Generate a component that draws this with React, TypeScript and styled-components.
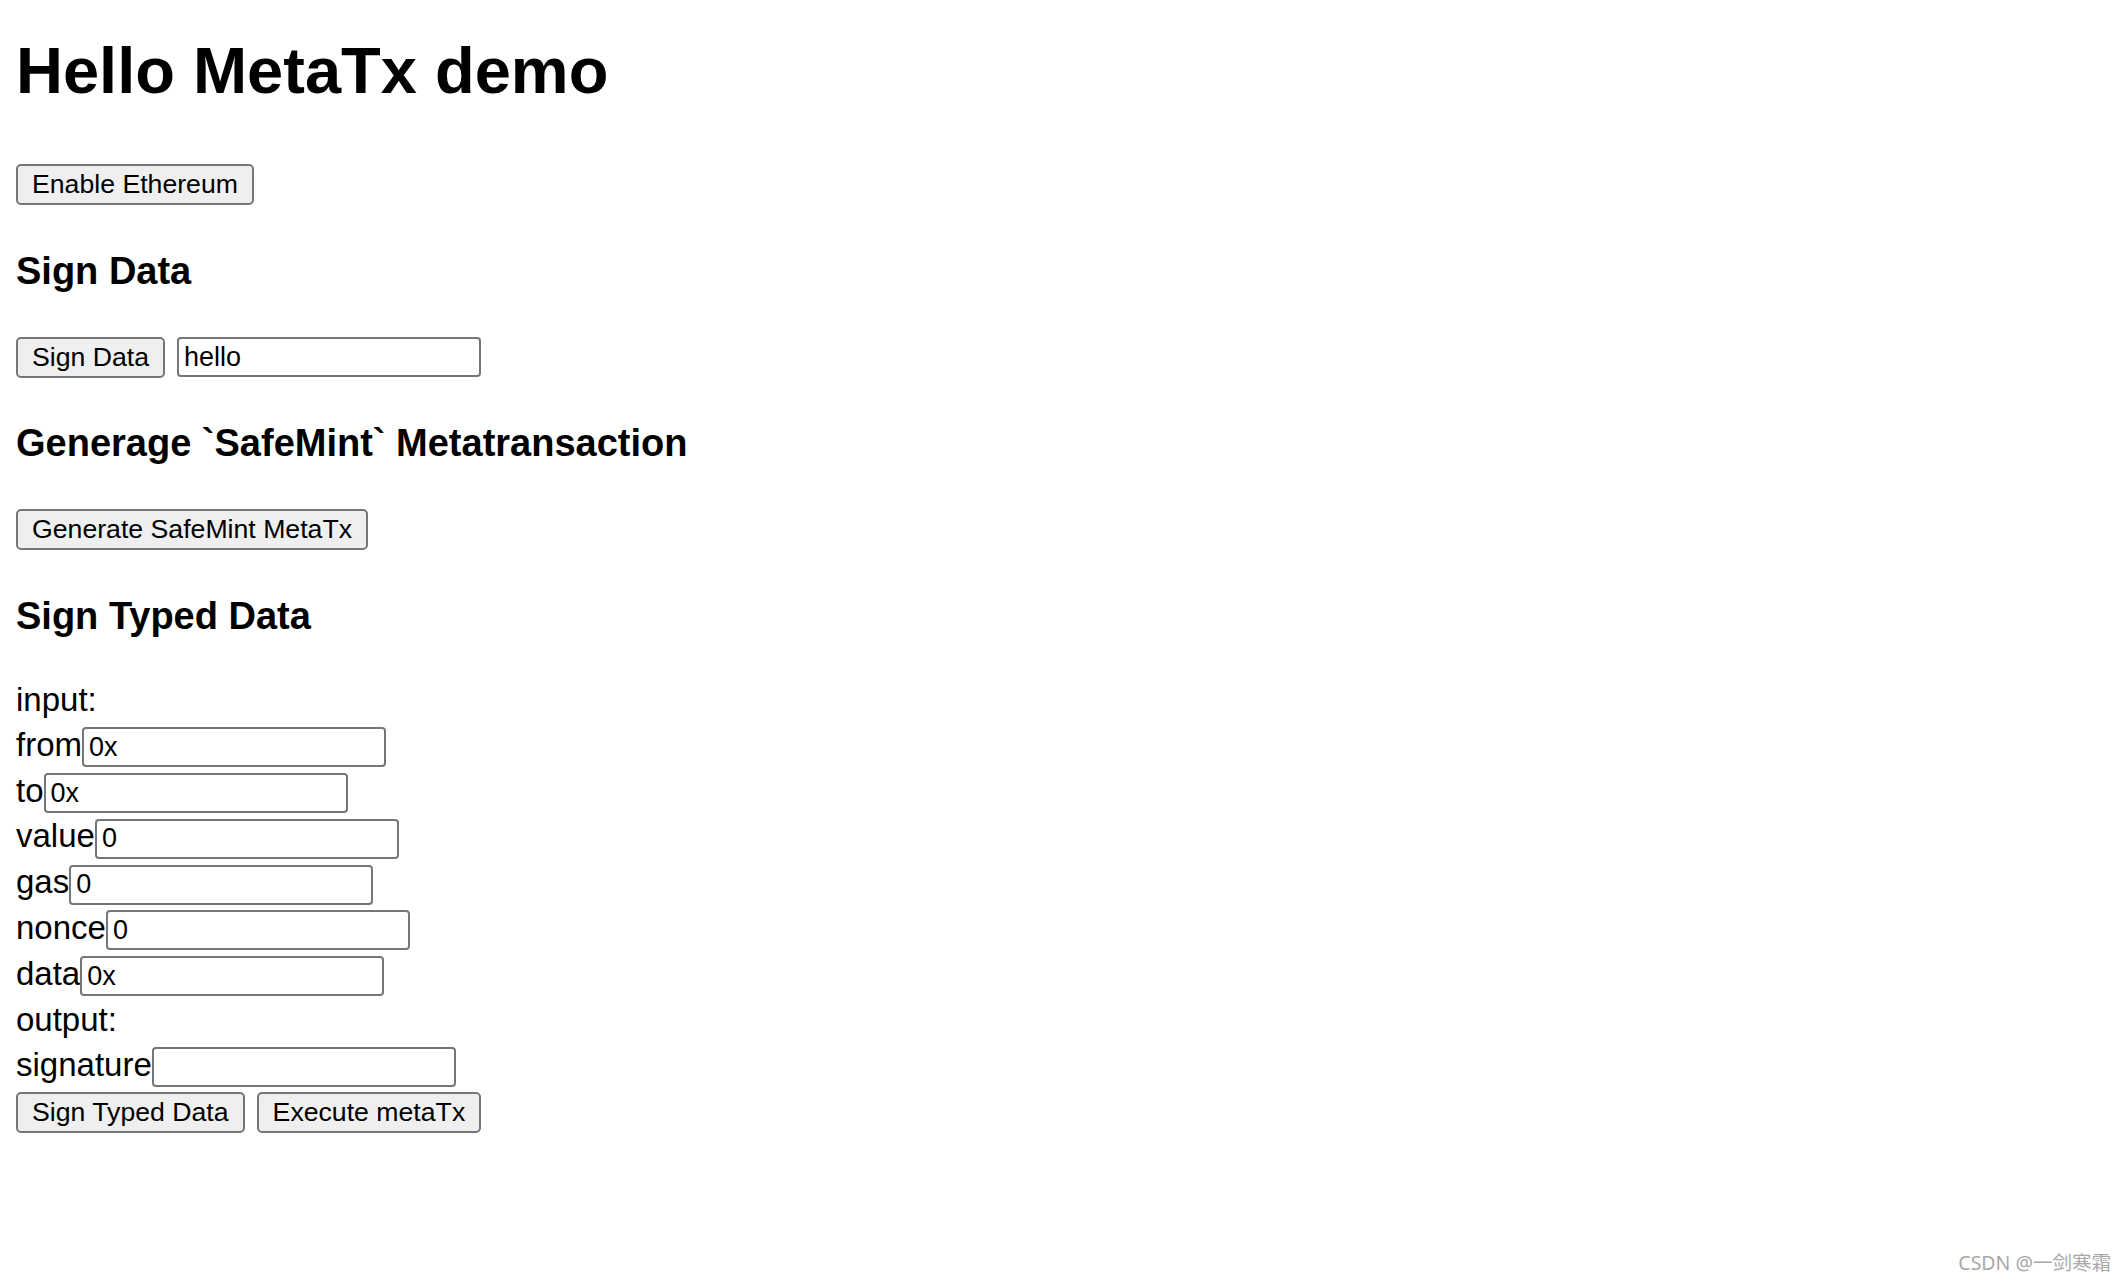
import React from "react";
import styled, { createGlobalStyle } from "styled-components";

const GlobalStyle = createGlobalStyle`
  html, body {
    margin: 0;
    padding: 0;
    background: #ffffff;
  }
  body {
    font-family: "Liberation Sans", Arial, Helvetica, sans-serif;
    color: #000000;
  }
`;

const Page = styled.main`
  position: relative;
  box-sizing: border-box;
  min-height: 100vh;
  padding: 34px 16px 0;
`;

const Title = styled.h1`
  margin: 0 0 56.3px;
  font-size: 65px;
  line-height: 74px;
  font-weight: 700;
`;

const SectionTitle = styled.h3`
  margin: 43.5px 0 44px;
  font-size: 38px;
  line-height: 44px;
  font-weight: 700;
`;

const Row = styled.div`
  display: flex;
  align-items: center;
  gap: 12px;
  height: 41px;
`;

const Button = styled.button`
  box-sizing: border-box;
  height: 41px;
  padding: 0 14px;
  font-family: "Liberation Sans", Arial, sans-serif;
  font-size: 26.67px;
  line-height: 37px;
  color: #000000;
  background: #efefef;
  border: 2px solid #767676;
  border-radius: 5px;
  white-space: nowrap;
`;

const TextInput = styled.input`
  box-sizing: border-box;
  width: 304px;
  height: 40px;
  padding: 0 5px;
  font-family: "Liberation Sans", Arial, sans-serif;
  font-size: 27px;
  color: #000000;
  background: #ffffff;
  border: 2px solid #767676;
  border-radius: 4px;
  outline: none;
`;

const Form = styled.div`
  display: flex;
  flex-direction: column;
`;

const TextLine = styled.div`
  font-size: 33px;
  line-height: 36px;
  padding-bottom: 9px;
`;

const FieldRow = styled.label`
  display: flex;
  align-items: baseline;
  height: 45.8px;
`;

const FieldLabel = styled.span`
  font-size: 33px;
  line-height: 36px;
`;

const Watermark = styled.div`
  position: absolute;
  right: 15px;
  bottom: 10px;
  font-family: "Noto Sans", "Noto Sans CJK SC", sans-serif;
  font-size: 19.5px;
  line-height: 1;
  color: #a8a8a8;
`;

const fields: { label: string; value: string }[] = [
  { label: "from", value: "0x" },
  { label: "to", value: "0x" },
  { label: "value", value: "0" },
  { label: "gas", value: "0" },
  { label: "nonce", value: "0" },
  { label: "data", value: "0x" },
];

export default function App() {
  return (
    <>
      <GlobalStyle />
      <Page>
        <Title>Hello MetaTx demo</Title>
        <Row>
          <Button>Enable Ethereum</Button>
        </Row>

        <SectionTitle>Sign Data</SectionTitle>
        <Row>
          <Button>Sign Data</Button>
          <TextInput defaultValue="hello" />
        </Row>

        <SectionTitle>Generage `SafeMint` Metatransaction</SectionTitle>
        <Row>
          <Button>Generate SafeMint MetaTx</Button>
        </Row>

        <SectionTitle>Sign Typed Data</SectionTitle>
        <Form>
          <TextLine>input:</TextLine>
          {fields.map((f) => (
            <FieldRow key={f.label}>
              <FieldLabel>{f.label}</FieldLabel>
              <TextInput defaultValue={f.value} />
            </FieldRow>
          ))}
          <TextLine>output:</TextLine>
          <FieldRow>
            <FieldLabel>signature</FieldLabel>
            <TextInput defaultValue="" />
          </FieldRow>
          <Row>
            <Button>Sign Typed Data</Button>
            <Button>Execute metaTx</Button>
          </Row>
        </Form>

        <Watermark>CSDN @一剑寒霜</Watermark>
      </Page>
    </>
  );
}
